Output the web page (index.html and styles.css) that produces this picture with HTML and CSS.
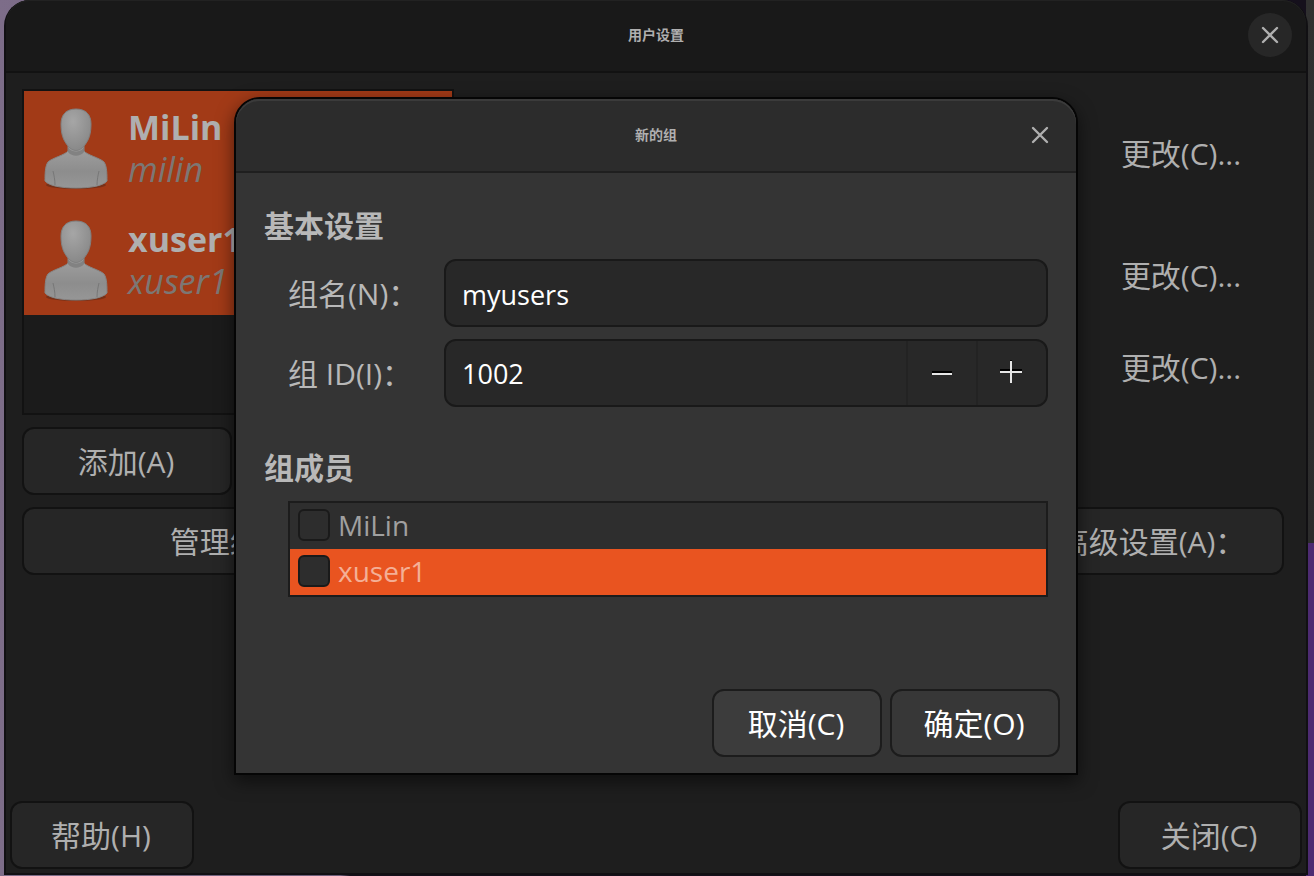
FILE: index.html
```html
<!DOCTYPE html>
<html lang="zh-CN">
<head>
<meta charset="utf-8">
<title>用户设置</title>
<link rel="stylesheet" href="styles.css">
</head>
<body>
<svg class="defs" width="0" height="0" aria-hidden="true">
  <defs>
    <radialGradient id="head-fill" cx="0.4" cy="0.3" r="0.8">
      <stop offset="0" stop-color="#a6a6a6"/>
      <stop offset="1" stop-color="#858585"/>
    </radialGradient>
    <linearGradient id="body-fill" x1="0" y1="0" x2="0" y2="1">
      <stop offset="0" stop-color="#a0a0a0"/>
      <stop offset="0.6" stop-color="#8d8d8d"/>
      <stop offset="1" stop-color="#969696"/>
    </linearGradient>
    <symbol id="avatar" viewBox="0 0 68 84">
      <ellipse cx="34" cy="79" rx="30" ry="4" fill="#5e2a18" opacity="0.6"/>
      <path d="M26 40V45C23 49 10 52 6 56C3 60 3 69 3 75C7 80 20 82 34 82S61 80 65 75C65 69 65 60 62 56C58 52 45 49 42 45V40Z" fill="url(#body-fill)" stroke="#858585" stroke-width="1"/>
      <path d="M13 79C13 74 12 69 11 65M55 79C55 74 56 69 57 65" fill="none" stroke="#777" stroke-width="1"/>
      <path d="M26 41C30 47 38 47 42 41V46C38 51 30 51 26 46Z" fill="#777" opacity="0.7"/>
      <path d="M34 3C24 3 19 9 19 18C19 28 21 34 26 40C31 46 37 46 42 40C47 34 49 28 49 18C49 9 44 3 34 3Z" fill="url(#head-fill)" stroke="#808080" stroke-width="1"/>
    </symbol>
    <symbol id="cross" viewBox="0 0 18 18">
      <path d="M2 2L16 16M16 2L2 16" fill="none" stroke="currentColor" stroke-width="2.4" stroke-linecap="round"/>
    </symbol>
  </defs>
</svg>

<div class="desktop">
  <div class="window">
    <header class="titlebar">
      <h1 class="title">用户设置</h1>
      <button class="close close-round" type="button" aria-label="关闭窗口"><svg class="cross"><use href="#cross"/></svg></button>
    </header>

    <main class="settings">
      <section class="users">
        <ul class="user-list">
          <li class="user">
            <svg class="avatar"><use href="#avatar"/></svg>
            <div><div class="user-name">MiLin</div><div class="user-login">milin</div></div>
          </li>
          <li class="user">
            <svg class="avatar"><use href="#avatar"/></svg>
            <div><div class="user-name">xuser1</div><div class="user-login">xuser1</div></div>
          </li>
        </ul>
        <button class="button add" type="button">添加(A)</button>
        <button class="button" type="button">管理组(M)</button>
      </section>
      <section class="details">
        <button class="flat first" type="button">更改(C)...</button>
        <button class="flat second" type="button">更改(C)...</button>
        <button class="flat third" type="button">更改(C)...</button>
        <button class="button advanced" type="button">高级设置(A)：</button>
      </section>
    </main>

    <footer class="window-actions">
      <button class="button" type="button">帮助(H)</button>
      <button class="button" type="button">关闭(C)</button>
    </footer>

    <form class="dialog" role="dialog" aria-labelledby="dialog-title">
      <header class="titlebar dialog-bar">
        <h2 class="title" id="dialog-title">新的组</h2>
        <button class="close" type="button" aria-label="关闭对话框"><svg class="cross"><use href="#cross"/></svg></button>
      </header>
      <div class="dialog-body">
        <h3 class="heading">基本设置</h3>
        <div class="fields">
          <label for="group-name">组名(N)：</label>
          <input class="entry" id="group-name" type="text" value="myusers">
          <label for="group-id">组 ID(I)：</label>
          <div class="entry spin">
            <input class="spin-value" id="group-id" type="text" inputmode="numeric" value="1002">
            <button class="step" type="button" aria-label="减少">
              <svg width="24" height="26" viewBox="0 0 24 26"><path d="M2 11H22V13H2Z" fill="#000"/><path d="M2 13H22V15H2Z" fill="#e6e6e6"/></svg>
            </button>
            <button class="step" type="button" aria-label="增加">
              <svg width="24" height="26" viewBox="0 0 24 26"><path d="M0 9H22V11H0ZM10 0H12V3H10Z" fill="#000"/><path d="M0 11H22V13H0ZM10 1H12V23H10Z" fill="#e6e6e6"/></svg>
            </button>
          </div>
        </div>
        <h3 class="heading members-heading">组成员</h3>
        <div class="members">
          <label class="member"><input type="checkbox">MiLin</label>
          <label class="member selected"><input type="checkbox">xuser1</label>
        </div>
      </div>
      <footer class="dialog-actions">
        <button class="button cancel" type="button">取消(C)</button>
        <button class="button confirm" type="submit">确定(O)</button>
      </footer>
    </form>
  </div>
</div>
</body>
</html>
```
FILE: styles.css
```css
* {
  box-sizing: border-box;
}

body {
  margin: 0;
  color: #afafaf;
  font: 30px/44px "Open Sans", "Noto Sans CJK SC", sans-serif;
}

button,
input {
  margin: 0;
  color: inherit;
  font: inherit;
}

button {
  padding: 0;
  border: 0;
  background: none;
}

h1, h2, h3, ul {
  margin: 0;
  padding: 0;
}

.defs {
  position: absolute;
}

.desktop {
  display: flex;
  min-height: 100vh;
  padding: 0 6px 1px 4px;
  background:
    linear-gradient(#303030, #2c2c2c) right top / 8px 543px no-repeat,
    linear-gradient(#4d2b72, #4d2b72) right bottom / 8px 340px no-repeat,
    linear-gradient(90deg, #7d6d89 0, #6c5d79 340px, #15101c 350px);
}

.window {
  position: relative;
  flex: 1;
  display: flex;
  flex-direction: column;
  border: 2px solid #111013;
  border-top: 0;
  border-radius: 26px 26px 0 0;
  background: #1e1e1e;
}

.titlebar {
  display: grid;
  grid-template-columns: 1fr auto 1fr;
  align-items: center;
  height: 73px;
  padding: 0 14px 2px;
  border-bottom: 2px solid #121212;
  border-radius: 24px 24px 0 0;
  background: #191919;
  box-shadow: inset 0 1px #222;
}

.title {
  grid-column: 2;
  font-size: 14px;
  line-height: 20px;
}

.close {
  display: grid;
  place-items: center;
  justify-self: end;
  width: 44px;
  height: 44px;
  border-radius: 50%;
}

.close-round {
  background: #272727;
}

.cross {
  width: 18px;
  height: 18px;
}

.settings {
  flex: 1;
  display: flex;
  justify-content: space-between;
  padding: 16px 22px 16px 16px;
}

.users {
  display: flex;
  flex-direction: column;
  gap: 12px;
  width: 432px;
}

.user-list {
  height: 326px;
  border: 2px solid #121212;
  background: #1b1b1b;
  list-style: none;
}

.user {
  display: flex;
  align-items: center;
  gap: 18px;
  height: 112px;
  padding: 2px 18px 0;
  background: #a23a17;
}

.avatar {
  width: 68px;
  height: 84px;
}

.user-name,
.user-login {
  font-size: 34px;
  line-height: 42px;
}

.user-name {
  font-weight: 700;
}

.user-login {
  color: #7c7774;
  font-style: italic;
}

.button {
  height: 68px;
  padding: 2px 2px 0 0;
  border: 2px solid #121212;
  border-radius: 12px;
  background: #262626;
}

.add {
  width: 210px;
}

.details {
  display: flex;
  flex-direction: column;
  align-items: flex-end;
  width: 262px;
}

.flat {
  width: 206px;
  height: 68px;
}

.first {
  margin-top: 31px;
}

.second {
  margin-top: 54px;
}

.third {
  margin-top: 24px;
}

.advanced {
  width: 100%;
  margin-top: 105px;
}

.window-actions {
  display: flex;
  justify-content: space-between;
  padding: 4px;
}

.window-actions .button {
  width: 184px;
}

.dialog {
  position: absolute;
  top: 97px;
  right: 228px;
  left: 228px;
  border: 2px solid #050505;
  border-radius: 26px 26px 0 0;
  background: #343434;
  box-shadow: 0 6px 18px rgba(0, 0, 0, 0.55);
}

.dialog-bar {
  height: 74px;
  padding-bottom: 0;
  border-color: #1f1f1f;
  background: #2c2c2c;
  box-shadow: inset 0 2px #3b3b3b;
}

.dialog-body {
  padding: 31px 28px 0;
  color: #b8b8b8;
}

.heading {
  font-size: 30px;
  line-height: 44px;
}

.fields {
  display: grid;
  grid-template-columns: 144px 1fr;
  gap: 12px;
  align-items: center;
  padding: 11px 0 0 24px;
}

.fields label {
  padding-top: 2px;
}

.entry {
  min-width: 0;
  height: 68px;
  padding: 2px 16px 0;
  border: 2px solid #191919;
  border-radius: 12px;
  outline: 0;
  background: #282828;
  color: #fff;
  font-size: 27px;
}

.spin {
  display: flex;
  padding: 0;
}

.spin-value {
  flex: 1;
  min-width: 0;
  padding: 2px 16px 0;
  border: 0;
  outline: 0;
  background: none;
}

.step {
  display: grid;
  place-items: center;
  width: 70px;
  border-left: 2px solid #232323;
}

.members-heading {
  margin-top: 39px;
}

.members {
  margin: 11px 0 0 24px;
  border: 2px solid #1c1c1c;
  background: #2e2e2e;
}

.member {
  display: flex;
  align-items: center;
  gap: 8px;
  height: 46px;
  padding: 0 8px 2px;
  color: #a0a0a0;
  font-size: 28px;
}

.member input {
  width: 32px;
  height: 32px;
  border: 2px solid #1a1a1a;
  border-radius: 6px;
  appearance: none;
  background: #2d2d2d;
}

.selected {
  background: #e95420;
  color: #f4af96;
}

.dialog-actions {
  display: flex;
  justify-content: flex-end;
  gap: 8px;
  padding: 92px 16px 16px;
  color: #fff;
}

.dialog-actions .button {
  width: 170px;
  border-color: #1c1c1c;
  background: #373737;
}

.dialog-actions .cancel {
  background: #3c3c3c;
}
```
